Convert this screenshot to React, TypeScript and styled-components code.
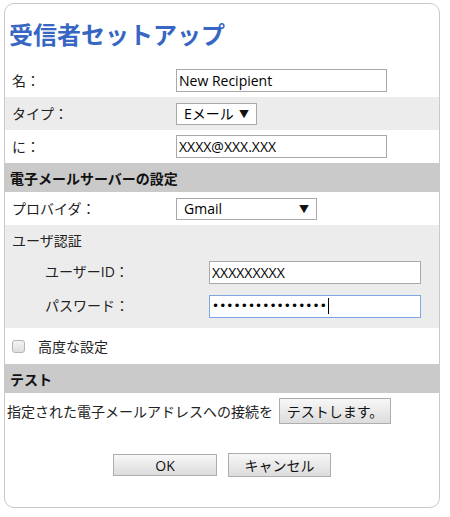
import styled, { createGlobalStyle } from "styled-components";

const GlobalStyle = createGlobalStyle`
  body {
    margin: 0;
    background: #ffffff;
    font-family: "Open Sans", "Noto Sans CJK JP", sans-serif;
    font-size: 14px;
    color: #222;
  }
`;

export default function App() {
  return (
    <>
      <GlobalStyle />
      <Card>
        <Title>受信者セットアップ</Title>

        <Row>
          <Label>名：</Label>
          <TextInput readOnly value="New Recipient" $width={211} />
        </Row>
        <Row $shaded>
          <Label>タイプ：</Label>
          <FakeSelect $width={81}>
            <span>Eメール</span>
            <Arrow>▼</Arrow>
          </FakeSelect>
        </Row>
        <Row>
          <Label>に：</Label>
          <TextInput readOnly value="XXXX@XXX.XXX" $width={211} />
        </Row>

        <SectionHeader>電子メールサーバーの設定</SectionHeader>

        <Row>
          <Label>プロバイダ：</Label>
          <FakeSelect $width={141}>
            <span>Gmail</span>
            <Arrow>▼</Arrow>
          </FakeSelect>
        </Row>

        <AuthBlock>
          <AuthHeading>ユーザ認証</AuthHeading>
          <SubRow>
            <Label>ユーザーID：</Label>
            <TextInput readOnly value="XXXXXXXXX" $width={212} />
          </SubRow>
          <SubRow>
            <Label>パスワード：</Label>
            <PasswordField>
              <Dots>{"••••••••••••••••"}</Dots>
              <Caret />
            </PasswordField>
          </SubRow>
        </AuthBlock>

        <CheckRow>
          <CheckBox type="checkbox" />
          <span>高度な設定</span>
        </CheckRow>

        <SectionHeader>テスト</SectionHeader>

        <TestRow>
          <span>指定された電子メールアドレスへの接続を</span>
          <Button $width={112} $height={26}>テストします。</Button>
        </TestRow>

        <Footer>
          <Button $width={104} $height={22}>OK</Button>
          <Button $width={103} $height={24}>キャンセル</Button>
        </Footer>
      </Card>
    </>
  );
}

const Card = styled.div`
  box-sizing: border-box;
  width: 436px;
  height: 505px;
  margin: 3px 0 0 4px;
  border: 1px solid #c9c9c9;
  border-radius: 10px;
  overflow: hidden;
  display: flex;
  flex-direction: column;
`;

const Title = styled.h1`
  box-sizing: border-box;
  height: 60px;
  margin: 0;
  padding: 15px 0 0 4px;
  font-size: 24px;
  line-height: 32px;
  font-weight: bold;
  color: #3767c3;
`;

const Row = styled.div<{ $shaded?: boolean }>`
  display: grid;
  grid-template-columns: 164px 1fr;
  align-items: center;
  height: 33px;
  padding: 0 7px;
  background: ${({ $shaded }) => ($shaded ? "#ececec" : "#ffffff")};
`;

const Label = styled.span`
  line-height: 20px;
  white-space: nowrap;
`;

const TextInput = styled.input<{ $width: number }>`
  box-sizing: border-box;
  width: ${({ $width }) => $width}px;
  height: 23px;
  margin: 0;
  padding: 0 2px;
  border: 1px solid #a9a9a9;
  border-radius: 0;
  font-family: "Open Sans", "Noto Sans CJK JP", sans-serif;
  font-size: 14px;
  color: #000;
  background: #fff;
  outline: none;
`;

const FakeSelect = styled.div<{ $width: number }>`
  box-sizing: border-box;
  display: flex;
  align-items: center;
  justify-content: space-between;
  width: ${({ $width }) => $width}px;
  height: 22px;
  padding: 0 7px 0 7px;
  border: 1px solid #a9a9a9;
  background: #fff;
  color: #000;
  line-height: 20px;
`;

const Arrow = styled.span`
  font-size: 10px;
  color: #111;
`;

const SectionHeader = styled.div`
  height: 29px;
  padding: 0 5px;
  display: flex;
  align-items: center;
  background: #cacaca;
  font-weight: bold;
  color: #111;
`;

const AuthBlock = styled.div`
  background: #ececec;
  padding-bottom: 5px;
`;

const AuthHeading = styled.div`
  height: 30px;
  padding: 0 7px;
  display: flex;
  align-items: center;
`;

const SubRow = styled.div`
  display: grid;
  grid-template-columns: 164px 212px;
  align-items: center;
  height: 34px;
  padding-left: 40px;
`;

const PasswordField = styled.div`
  box-sizing: border-box;
  display: flex;
  align-items: center;
  width: 212px;
  height: 23px;
  padding: 0 2px;
  border: 1px solid #7ea6e2;
  background: #fff;
`;

const Dots = styled.span`
  font-family: "DejaVu Sans", sans-serif;
  font-size: 12px;
  letter-spacing: 0.1px;
  line-height: 20px;
  color: #000;
`;

const Caret = styled.span`
  width: 1px;
  height: 16px;
  margin-left: 1px;
  background: #000;
`;

const CheckRow = styled.div`
  display: flex;
  align-items: center;
  gap: 13px;
  height: 36px;
  padding-left: 7px;
`;

const CheckBox = styled.input`
  appearance: none;
  width: 13px;
  height: 13px;
  margin: 0;
  border: 1px solid #b5b5b5;
  border-radius: 3px;
  background: linear-gradient(#f4f4f4, #dedede);
`;

const TestRow = styled.div`
  display: flex;
  align-items: center;
  gap: 6px;
  height: 36px;
  padding: 0 2px;
`;

const Button = styled.button<{ $width: number; $height: number }>`
  box-sizing: border-box;
  width: ${({ $width }) => $width}px;
  height: ${({ $height }) => $height}px;
  padding: 0;
  border: 1px solid #adadad;
  border-radius: 0;
  background: linear-gradient(#f7f7f7, #dcdcdc);
  font-family: "Open Sans", "Noto Sans CJK JP", sans-serif;
  font-size: 14px;
  color: #111;
`;

const Footer = styled.div`
  display: flex;
  justify-content: center;
  align-items: center;
  gap: 11px;
  padding-top: 24px;
`;
